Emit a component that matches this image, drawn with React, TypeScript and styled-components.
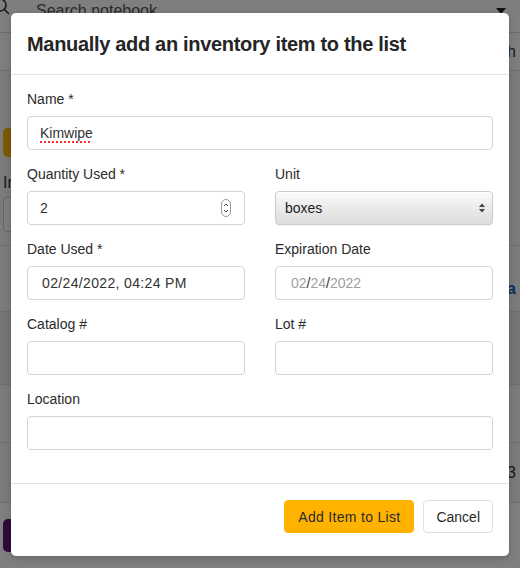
import React from "react";
import styled, { createGlobalStyle } from "styled-components";

const Global = createGlobalStyle`
  html, body { margin: 0; padding: 0; background: #ffffff; }
  body { font-family: "Liberation Sans", Arial, Helvetica, sans-serif; width: 520px; height: 568px; overflow: hidden; }
  * { box-sizing: border-box; }
`;

/* ---------- background page ---------- */
const Page = styled.div`
  width: 520px;
  height: 568px;
  position: relative;
  overflow: hidden;
  color: #333;
`;

const TopBar = styled.div`
  height: 33px;
  display: flex;
  align-items: flex-start;
  padding: 0 14px 0 0;
  border-bottom: 1px solid #dcdcdc;
  gap: 24px;
`;

const SearchIcon = styled.svg`
  margin-left: -8px;
  margin-top: -3px;
  flex: none;
`;

const SearchText = styled.div`
  flex: 1;
  font-size: 16px;
  color: #555;
  padding-top: 2px;
`;

const Caret = styled.div`
  width: 0;
  height: 0;
  margin-top: 8px;
  border-left: 5px solid transparent;
  border-right: 5px solid transparent;
  border-top: 6px solid #222;
`;

const SubBar = styled.div`
  height: 38px;
  display: flex;
  justify-content: flex-end;
  align-items: center;
  border-bottom: 1px solid #dcdcdc;
  padding-right: 4px;
  font-size: 16px;
  color: #333;
`;

const Content = styled.div`
  background: #f6f6f6;
  height: 432px;
  padding: 57px 0 0 3px;
  display: flex;
  flex-direction: column;
`;

const OrangeBtn = styled.div`
  width: 60px;
  height: 29px;
  border-radius: 5px;
  background: #ffb400;
`;

const PageLabel = styled.div`
  margin-top: 17px;
  font-size: 16px;
  line-height: 18px;
`;

const PageInput = styled.div`
  margin-top: 5px;
  width: 200px;
  height: 35px;
  background: #fff;
  border: 1px solid #ccc;
  border-radius: 4px;
`;

const TableRow = styled.div<{ $h: number; $shade?: boolean }>`
  height: ${(p) => p.$h}px;
  margin-left: -3px;
  border-bottom: 1px solid #d8d8d8;
  background: ${(p) => (p.$shade ? "#ececec" : "transparent")};
  display: flex;
  justify-content: flex-end;
  align-items: center;
  padding-right: 4px;
  font-size: 16px;
`;

const LinkText = styled.span`
  color: #1a5fb4;
  font-weight: 700;
  margin-top: 22px;
`;

const PurpleBtn = styled.div`
  margin: 16px 0 0 3px;
  width: 292px;
  height: 33px;
  border-radius: 5px;
  background: #5a1475;
`;

/* ---------- modal ---------- */
const Backdrop = styled.div`
  position: absolute;
  inset: 0;
  background: rgba(0, 0, 0, 0.5);
`;

const Dialog = styled.div`
  position: absolute;
  left: 11px;
  top: 13px;
  width: 498px;
  height: 543px;
  background: #fff;
  border-radius: 5px;
  box-shadow: 0 2px 8px rgba(0, 0, 0, 0.2);
  display: flex;
  flex-direction: column;
`;

const Header = styled.div`
  padding: 16px 16px 15px;
  border-bottom: 1px solid #e3e3e3;
`;

const Title = styled.h5`
  margin: 0;
  font-size: 20px;
  line-height: 30px;
  font-weight: 700;
  color: #252525;
  letter-spacing: -0.32px;
`;

const Body = styled.div`
  padding: 16px 16px 0;
  flex: 1;
  border-bottom: 1px solid #e3e3e3;
`;

const Row = styled.div`
  display: grid;
  grid-template-columns: 1fr 1fr;
  column-gap: 30px;
`;

const Field = styled.div`
  margin-bottom: 16px;
  display: flex;
  flex-direction: column;
`;

const Label = styled.label`
  font-size: 14px;
  line-height: 17px;
  color: #2b2b2b;
  margin-bottom: 8px;
`;

const InputWrap = styled.div`
  position: relative;
`;

const Input = styled.input<{ $pad?: number; $spacing?: number }>`
  width: 100%;
  height: 34px;
  border: 1px solid #cfd4da;
  border-radius: 4px;
  padding: 0 ${(p) => p.$pad ?? 12}px;
  font-family: "Liberation Sans", Arial, sans-serif;
  font-size: 14px;
  letter-spacing: ${(p) => p.$spacing ?? 0}px;
  color: #333;
  background: #fff;
  outline: none;
`;

const TextBox = styled.div`
  height: 34px;
  border: 1px solid #cfd4da;
  border-radius: 4px;
  display: flex;
  align-items: center;
  padding: 0 12px;
  font-size: 14px;
  color: #333;
`;

const Misspelled = styled.span`
  text-decoration-line: underline;
  text-decoration-style: dotted;
  text-decoration-color: #ff2a2a;
  text-decoration-thickness: 1.5px;
  text-underline-offset: 3px;
`;

const Spinner = styled.svg`
  position: absolute;
  right: 14px;
  top: 8px;
`;

const SelectBox = styled.div`
  height: 34px;
  border: 1px solid #c9ced4;
  border-radius: 4px;
  background: linear-gradient(#fbfbfb, #ececec 45%, #dcdcdc);
  box-shadow: inset 0 1px 0 #fff, 0 1px 1px rgba(0, 0, 0, 0.06);
  display: flex;
  align-items: center;
  justify-content: space-between;
  padding: 0 6px 0 9px;
  font-size: 14px;
  color: #222;
`;

const DateBox = styled(TextBox)`
  padding: 0 15px;
`;

const Muted = styled.span`
  color: #a0a0a0;
`;

const Footer = styled.div`
  display: flex;
  justify-content: flex-end;
  gap: 9px;
  padding: 16px 16px 23px;
`;

const Button = styled.button<{ $primary?: boolean }>`
  height: 33px;
  padding: 0 ${(p) => (p.$primary ? 13 : 12)}px;
  border-radius: 4px;
  font-family: "Liberation Sans", Arial, sans-serif;
  font-size: 14px;
  letter-spacing: ${(p) => (p.$primary ? 0.3 : 0)}px;
  color: #2a2a2a;
  cursor: pointer;
  border: 1px solid ${(p) => (p.$primary ? "#ffb300" : "#e0e0e0")};
  background: ${(p) => (p.$primary ? "#ffb300" : "#fff")};
`;

export default function App() {
  return (
    <>
      <Global />
      <Page>
        <TopBar>
          <SearchIcon width="20" height="20" viewBox="0 0 20 20">
            <circle cx="8" cy="8" r="6" fill="none" stroke="#333" strokeWidth="1.6" />
            <line x1="12.5" y1="12.5" x2="17" y2="17" stroke="#333" strokeWidth="1.6" />
          </SearchIcon>
          <SearchText>Search notebook</SearchText>
          <Caret />
        </TopBar>
        <SubBar>ch</SubBar>
        <Content>
          <OrangeBtn />
          <PageLabel>In</PageLabel>
          <PageInput />
          <TableRow $h={14} />
          <TableRow $h={66}>
            <LinkText>ata</LinkText>
          </TableRow>
          <TableRow $h={74} $shade />
          <TableRow $h={58} />
          <TableRow $h={60}>3</TableRow>
        </Content>
        <PurpleBtn />
        <Backdrop />
        <Dialog>
          <Header>
            <Title>Manually add an inventory item to the list</Title>
          </Header>
          <Body>
            <Field>
              <Label>Name *</Label>
              <TextBox>
                <Misspelled>Kimwipe</Misspelled>
              </TextBox>
            </Field>
            <Row>
              <Field>
                <Label>Quantity Used *</Label>
                <InputWrap>
                  <Input readOnly value="2" />
                  <Spinner width="10" height="18" viewBox="0 0 10 18">
                    <rect x="0.5" y="0.5" width="9" height="17" rx="4.5" fill="#fff" stroke="#9a9a9a" />
                    <path d="M3 7 L5 5 L7 7" fill="none" stroke="#555" strokeWidth="1" />
                    <path d="M3 11 L5 13 L7 11" fill="none" stroke="#555" strokeWidth="1" />
                  </Spinner>
                </InputWrap>
              </Field>
              <Field>
                <Label>Unit</Label>
                <SelectBox>
                  <span>boxes</span>
                  <svg width="8" height="12" viewBox="0 0 8 12">
                    <path d="M1 5 L4 1.5 L7 5 Z" fill="#444" />
                    <path d="M1 7 L4 10.5 L7 7 Z" fill="#444" />
                  </svg>
                </SelectBox>
              </Field>
            </Row>
            <Row>
              <Field>
                <Label>Date Used *</Label>
                <Input readOnly $pad={14} $spacing={0.35} value="02/24/2022, 04:24 PM" />
              </Field>
              <Field>
                <Label>Expiration Date</Label>
                <DateBox>
                  <Muted>02</Muted>/<Muted>24</Muted>/<Muted>2022</Muted>
                </DateBox>
              </Field>
            </Row>
            <Row>
              <Field>
                <Label>Catalog #</Label>
                <Input readOnly value="" />
              </Field>
              <Field>
                <Label>Lot #</Label>
                <Input readOnly value="" />
              </Field>
            </Row>
            <Field>
              <Label>Location</Label>
              <Input readOnly value="" />
            </Field>
          </Body>
          <Footer>
            <Button $primary>Add Item to List</Button>
            <Button>Cancel</Button>
          </Footer>
        </Dialog>
      </Page>
    </>
  );
}
